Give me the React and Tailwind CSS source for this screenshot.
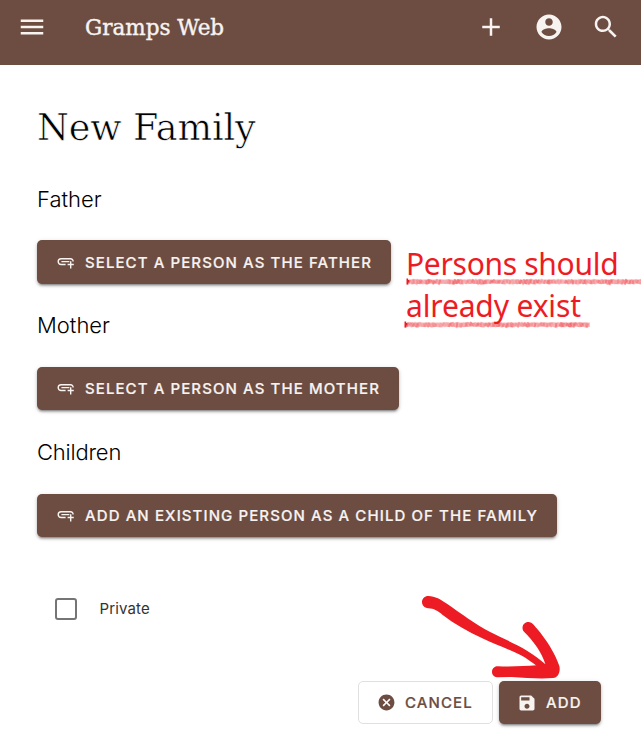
import React from "react";

const ICONS = {
  menu: "M3 18h18v-2H3v2zm0-5h18v-2H3v2zm0-7v2h18V6H3z",
  plus: "M19 13h-6v6h-2v-6H5v-2h6V5h2v6h6v2z",
  account:
    "M12 2C6.48 2 2 6.48 2 12s4.48 10 10 10 10-4.48 10-10S17.52 2 12 2zm0 3c1.66 0 3 1.34 3 3s-1.34 3-3 3-3-1.34-3-3 1.34-3 3-3zm0 14.2c-2.5 0-4.71-1.28-6-3.22.03-1.99 4-3.08 6-3.08 1.99 0 5.97 1.09 6 3.08-1.29 1.94-3.5 3.22-6 3.22z",
  search:
    "M15.5 14h-.79l-.28-.27C15.41 12.59 16 11.11 16 9.5 16 5.91 13.09 3 9.5 3S3 5.91 3 9.5 5.91 16 9.5 16c1.61 0 3.09-.59 4.23-1.57l.27.28v.79l5 4.99L20.49 19l-4.99-5zm-6 0C7.01 14 5 11.99 5 9.5S7.01 5 9.5 5 14 7.01 14 9.5 11.99 14 9.5 14z",
  cancel:
    "M12 2C6.47 2 2 6.47 2 12s4.47 10 10 10 10-4.47 10-10S17.53 2 12 2zm5 13.59L15.59 17 12 13.41 8.41 17 7 15.59 10.59 12 7 8.41 8.41 7 12 10.59 15.59 7 17 8.41 13.41 12 17 15.59z",
  save: "M17 3H5c-1.11 0-2 .9-2 2v14c0 1.1.89 2 2 2h14c1.1 0 2-.9 2-2V7l-4-4zm-5 16c-1.66 0-3-1.34-3-3s1.34-3 3-3 3 1.34 3 3-1.34 3-3 3zm3-10H5V5h10v4z",
};

function Icon({ name, className }) {
  return (
    <svg viewBox="0 0 24 24" fill="currentColor" className={`shrink-0 ${className}`}>
      <path d={ICONS[name]} />
    </svg>
  );
}

function LinkPlusIcon() {
  return (
    <svg viewBox="0 0 20 20" fill="none" stroke="currentColor" strokeWidth="1.4" className="mr-[9px] size-[20px] shrink-0">
      <path d="M9.6 12.5H5.1a2.9 2.9 0 0 1 0-5.8h9.4a2.6 2.6 0 0 1 2.6 2.8" />
      <path d="M5.4 9.6h8M14.7 9.2v7.2M11.6 12.5h6.2" />
    </svg>
  );
}

const RAISED =
  "flex items-center rounded-[5px] bg-[#6d4c41] text-[#f7f3f1] shadow-[0_3px_2px_-2px_rgba(0,0,0,0.3),0_2px_3px_rgba(0,0,0,0.2),0_1px_5px_rgba(0,0,0,0.12)]";
const LABEL =
  "whitespace-nowrap font-[Inter,sans-serif] text-[15px] font-medium leading-none tracking-[1.09px] [-webkit-text-stroke:0.2px_currentColor]";

function PersonSection({ title, label, width, className }) {
  return (
    <section className={className}>
      <h3 className="font-[Inter,sans-serif] text-[22px] font-light leading-[28px] text-black">{title}</h3>
      <button className={`mt-[27px] pl-[19px] ${width} ${RAISED}`}>
        <LinkPlusIcon />
        <span className={LABEL}>{label}</span>
      </button>
    </section>
  );
}

// Repeatable pseudo-random value in 0..1 for the chalk texture
const noise = (n) => {
  const v = Math.sin(n * 127.1 + 3.7) * 43758.5453;
  return v - Math.floor(v);
};

function ChalkLine({ length, seed }) {
  const dabs = Array.from({ length: Math.floor((length - 3) / 1.5) }, (_, i) => ({
    x: 1.5 + i * 1.5,
    top: 0.8 + noise(i + seed) * 1.8,
    bottom: 4.6 + noise(i * 3 + seed) * 2.6,
    alpha: 0.08 + noise(i * 7 + seed) * 0.3,
  }));
  return (
    <svg width={length} height="8" className="block">
      <rect x="1" y="1.4" width={length - 2} height="4.6" fill="#ed1c24" opacity="0.26" />
      {dabs.map((d, i) => (
        <line key={i} x1={d.x} y1={d.bottom} x2={d.x + 1} y2={d.top} stroke="#ed1c24" strokeWidth="2" opacity={d.alpha} />
      ))}
      <path d="M1.3 0.5v6M2.5 2v2.5" stroke="#ed1c24" strokeWidth="1.6" />
    </svg>
  );
}

function Note() {
  return (
    <div className="absolute left-[404px] top-[243px] h-[90px] w-[237px] overflow-hidden font-['Noto_Sans',sans-serif] text-[30px] leading-[42px] text-[#ed1c24]">
      <div className="whitespace-nowrap pl-[2px] tracking-[-0.3px]">Persons should</div>
      <div className="whitespace-nowrap pl-[2px] tracking-[-0.15px]">already exist</div>
      <div className="absolute left-[2px] top-[35px]"><ChalkLine length={240} seed={2} /></div>
      <div className="absolute left-0 top-[78px]"><ChalkLine length={187} seed={41} /></div>
    </div>
  );
}

function Arrow() {
  return (
    <svg viewBox="0 0 450 270" className="absolute left-[415px] top-[590px] h-[90px] w-[150px]" fill="#ed1c24">
      <path d="M40 18C60 18 78 29 97 42C137 70 180 102 224 125C262 145 302 161 336 182C358 196 378 210 394 225L368 230C352 218 336 206 318 196C285 179 242 164 202 145C160 125 118 102 82 74C70 64 56 55 40 55C28 53 21 46 21 36C21 26 29 18 40 18Z" />
      <path d="M325 123C318 110 327 96 340 96C353 97 359 108 365 115C394 149 420 190 433 228C437 244 430 264 414 264C378 267 333 264 291 261L246 262C236 261 230 253 231 244C232 235 239 229 249 229C291 231 330 228 364 226C375 226 383 224 391 222C381 190 357 154 325 123Z" />
    </svg>
  );
}

export default function App() {
  return (
    <div className="relative h-[737px] w-[641px] overflow-hidden bg-white">
      <header className="flex h-[65px] items-start bg-[#6d4c41] pl-[17px] pt-[12px] text-[#f7f3f1]">
        <Icon name="menu" className="size-[30px]" />
        <div className="ml-[38px] whitespace-nowrap pt-px font-['DejaVu_Serif',serif] text-[21.5px] leading-[30px] [-webkit-text-stroke:0.4px_currentColor]">
          Gramps Web
        </div>
        <div className="ml-auto flex gap-[27.5px] pr-[20px]">
          <Icon name="plus" className="size-[30px]" />
          <Icon name="account" className="size-[30px]" />
          <Icon name="search" className="size-[30px]" />
        </div>
      </header>

      <main className="px-[37px]">
        <h2 className="mt-[38px] h-[49px] whitespace-nowrap font-['DejaVu_Serif',serif] text-[36.5px] leading-[50px] tracking-[-0.1px] text-black [-webkit-text-stroke:0.6px_white]">
          New Family
        </h2>
        <PersonSection className="mt-[33px]" title="Father" label="SELECT A PERSON AS THE FATHER" width="h-[44px] w-[354px]" />
        <PersonSection className="mt-[27px] pb-px [&>button]:mt-[28px]" title="Mother" label="SELECT A PERSON AS THE MOTHER" width="h-[43px] w-[362px] pb-px" />
        <PersonSection className="mt-[27px] [&>button]:mt-[28px] [&>h3]:tracking-[-0.2px]" title="Children" label="ADD AN EXISTING PERSON AS A CHILD OF THE FAMILY" width="h-[43px] w-[520px] pb-px" />

        <label className="mt-[60px] flex h-[23px] items-center pl-[18px]">
          <span className="size-[22px] rounded-[3px] border-2 border-[#757575]" />
          <span className="ml-[22.5px] font-[Inter,sans-serif] text-[15px] leading-none tracking-[0.15px] text-[#333]">Private</span>
        </label>
      </main>

      <div className="mt-[61px] flex justify-end gap-[6px] pr-[40px]">
        <button className="flex h-[43px] w-[135px] items-center rounded-[5px] border border-[#e0e0e0] pl-[18px] text-[#6d4c41]">
          <Icon name="cancel" className="mr-[9px] size-[19px]" />
          <span className={LABEL}>CANCEL</span>
        </button>
        <button className={`h-[43px] w-[102px] pl-[18px] ${RAISED}`}>
          <Icon name="save" className="mr-[9px] size-[20px]" />
          <span className={LABEL}>ADD</span>
        </button>
      </div>

      <Note />
      <Arrow />
    </div>
  );
}
